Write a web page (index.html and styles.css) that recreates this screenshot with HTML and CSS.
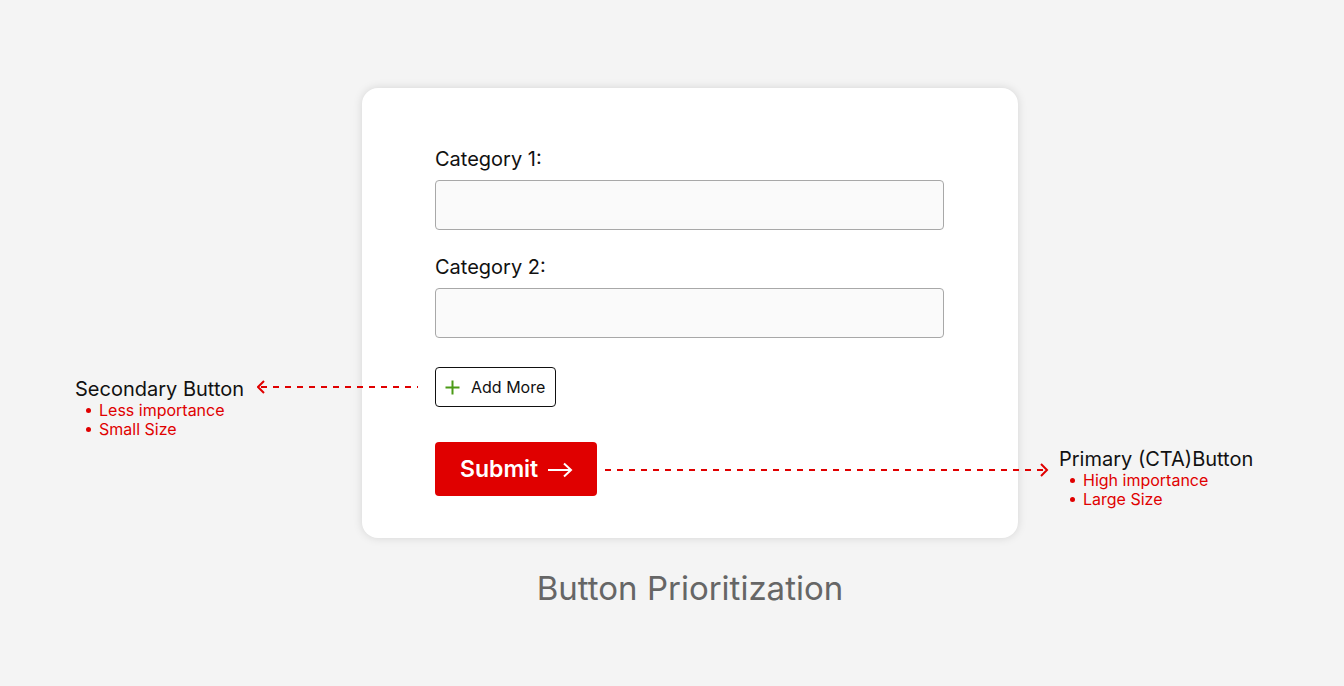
FILE: index.html
```html
<!DOCTYPE html>
<html lang="en">
<head>
<meta charset="utf-8">
<title>Button Prioritization</title>
<link rel="stylesheet" href="styles.css">
</head>
<body>
<div class="page">
  <div class="column">
    <div class="card">
      <div class="field">
        <label class="label">Category 1:</label>
        <div class="input"></div>
      </div>
      <div class="field">
        <label class="label">Category 2:</label>
        <div class="input"></div>
      </div>
      <button class="btn-secondary">
        <svg class="plus" width="15" height="15" viewBox="0 0 15 15"><path d="M7.5 0.5V14.5M0.5 7.5H14.5" stroke="#4b9a16" stroke-width="2" fill="none"/></svg>
        <span>Add More</span>
      </button>
      <button class="btn-primary">
        <span>Submit</span>
        <svg class="arrow" width="26" height="16" viewBox="0 0 26 16"><path d="M1 8H24M17 1.5L24 8L17 14.5" stroke="#fff" stroke-width="2" fill="none"/></svg>
      </button>

      <div class="note note-secondary">
        <div class="note-text">
          <div class="note-title">Secondary Button</div>
          <ul class="note-list">
            <li>Less importance</li>
            <li>Small Size</li>
          </ul>
        </div>
        <svg class="callout" width="162" height="14" viewBox="0 0 162 14"><path d="M7 1L1 7L7 13" stroke="#e00000" stroke-width="2" fill="none"/><path d="M4 7H161" stroke="#e00000" stroke-width="2" stroke-dasharray="6 6" fill="none"/></svg>
      </div>

      <svg class="callout-primary" width="444" height="14" viewBox="0 0 444 14"><path d="M0 7H440" stroke="#e00000" stroke-width="2" stroke-dasharray="6 6" fill="none"/><path d="M436 1L442 7L436 13" stroke="#e00000" stroke-width="2" fill="none"/></svg>
      <div class="note note-primary">
        <div class="note-text">
          <div class="note-title">Primary (CTA)Button</div>
          <ul class="note-list">
            <li>High importance</li>
            <li>Large Size</li>
          </ul>
        </div>
      </div>
    </div>
    <div class="caption">Button Prioritization</div>
  </div>
</div>
</body>
</html>
```

FILE: styles.css
```css
* { box-sizing: border-box; }
html, body { margin: 0; padding: 0; }
body {
  background: #f4f4f4;
  font-family: Inter, "Noto Sans", "Liberation Sans", sans-serif;
  color: #111;
  width: 1344px;
  height: 686px;
  overflow: hidden;
}
.page {
  padding-top: 88px;
  padding-left: 362px;
}
.column {
  width: 656px;
  display: flex;
  flex-direction: column;
  align-items: stretch;
}
.card {
  position: relative;
  background: #fff;
  border-radius: 16px;
  box-shadow: 0 0 10px rgba(0,0,0,0.13);
  height: 450px;
  padding: 59px 74px 42px 73px;
  display: flex;
  flex-direction: column;
  align-items: flex-start;
}
.field {
  width: 509px;
  display: flex;
  flex-direction: column;
  margin-bottom: 25px;
}
.field + .field { margin-bottom: 29px; }
.label {
  font-size: 20px;
  line-height: 24px;
  font-weight: 400;
  color: #111;
  margin-bottom: 9px;
}
.input {
  height: 50px;
  border: 1px solid #a8a8a8;
  border-radius: 4px;
  background: #fafafa;
}
.btn-secondary {
  height: 40px;
  width: 121px;
  border: 1px solid #111;
  border-radius: 4px;
  background: #fff;
  display: flex;
  align-items: center;
  gap: 11px;
  padding: 0 0 0 9px;
  font-family: inherit;
  font-size: 16px;
  font-weight: 400;
  color: #111;
  margin-bottom: 35px;
}
.plus { display: block; }
.btn-primary {
  height: 54px;
  width: 162px;
  border: none;
  border-radius: 4px;
  background: #e00000;
  color: #fff;
  display: flex;
  align-items: center;
  gap: 9px;
  padding: 0 0 0 25px;
  font-family: inherit;
  font-size: 23px;
  font-weight: 600;
}
.arrow { display: block; margin-top: 1px; }

.note {
  position: absolute;
  display: flex;
  align-items: flex-start;
}
.note-secondary {
  left: -287px;
  top: 289px;
}
.note-secondary .callout {
  margin-left: 13px;
  margin-top: 3px;
}
.note-primary {
  left: 697px;
  top: 359px;
}
.callout-primary {
  position: absolute;
  left: 243px;
  top: 375px;
}
.note-title {
  font-size: 20px;
  line-height: 24px;
  font-weight: 400;
  color: #111;
  white-space: nowrap;
}
.note-list {
  margin: 0;
  padding: 0 0 0 24px;
  list-style: none;
}
.note-list li {
  position: relative;
  font-size: 16px;
  line-height: 19px;
  color: #e00000;
  white-space: nowrap;
}
.note-list li::before {
  content: "";
  position: absolute;
  left: -13px;
  top: 7px;
  width: 5px;
  height: 5px;
  border-radius: 50%;
  background: #e00000;
}
.caption {
  margin-top: 30px;
  text-align: center;
  font-size: 33px;
  line-height: 40px;
  color: #666;
}
```
